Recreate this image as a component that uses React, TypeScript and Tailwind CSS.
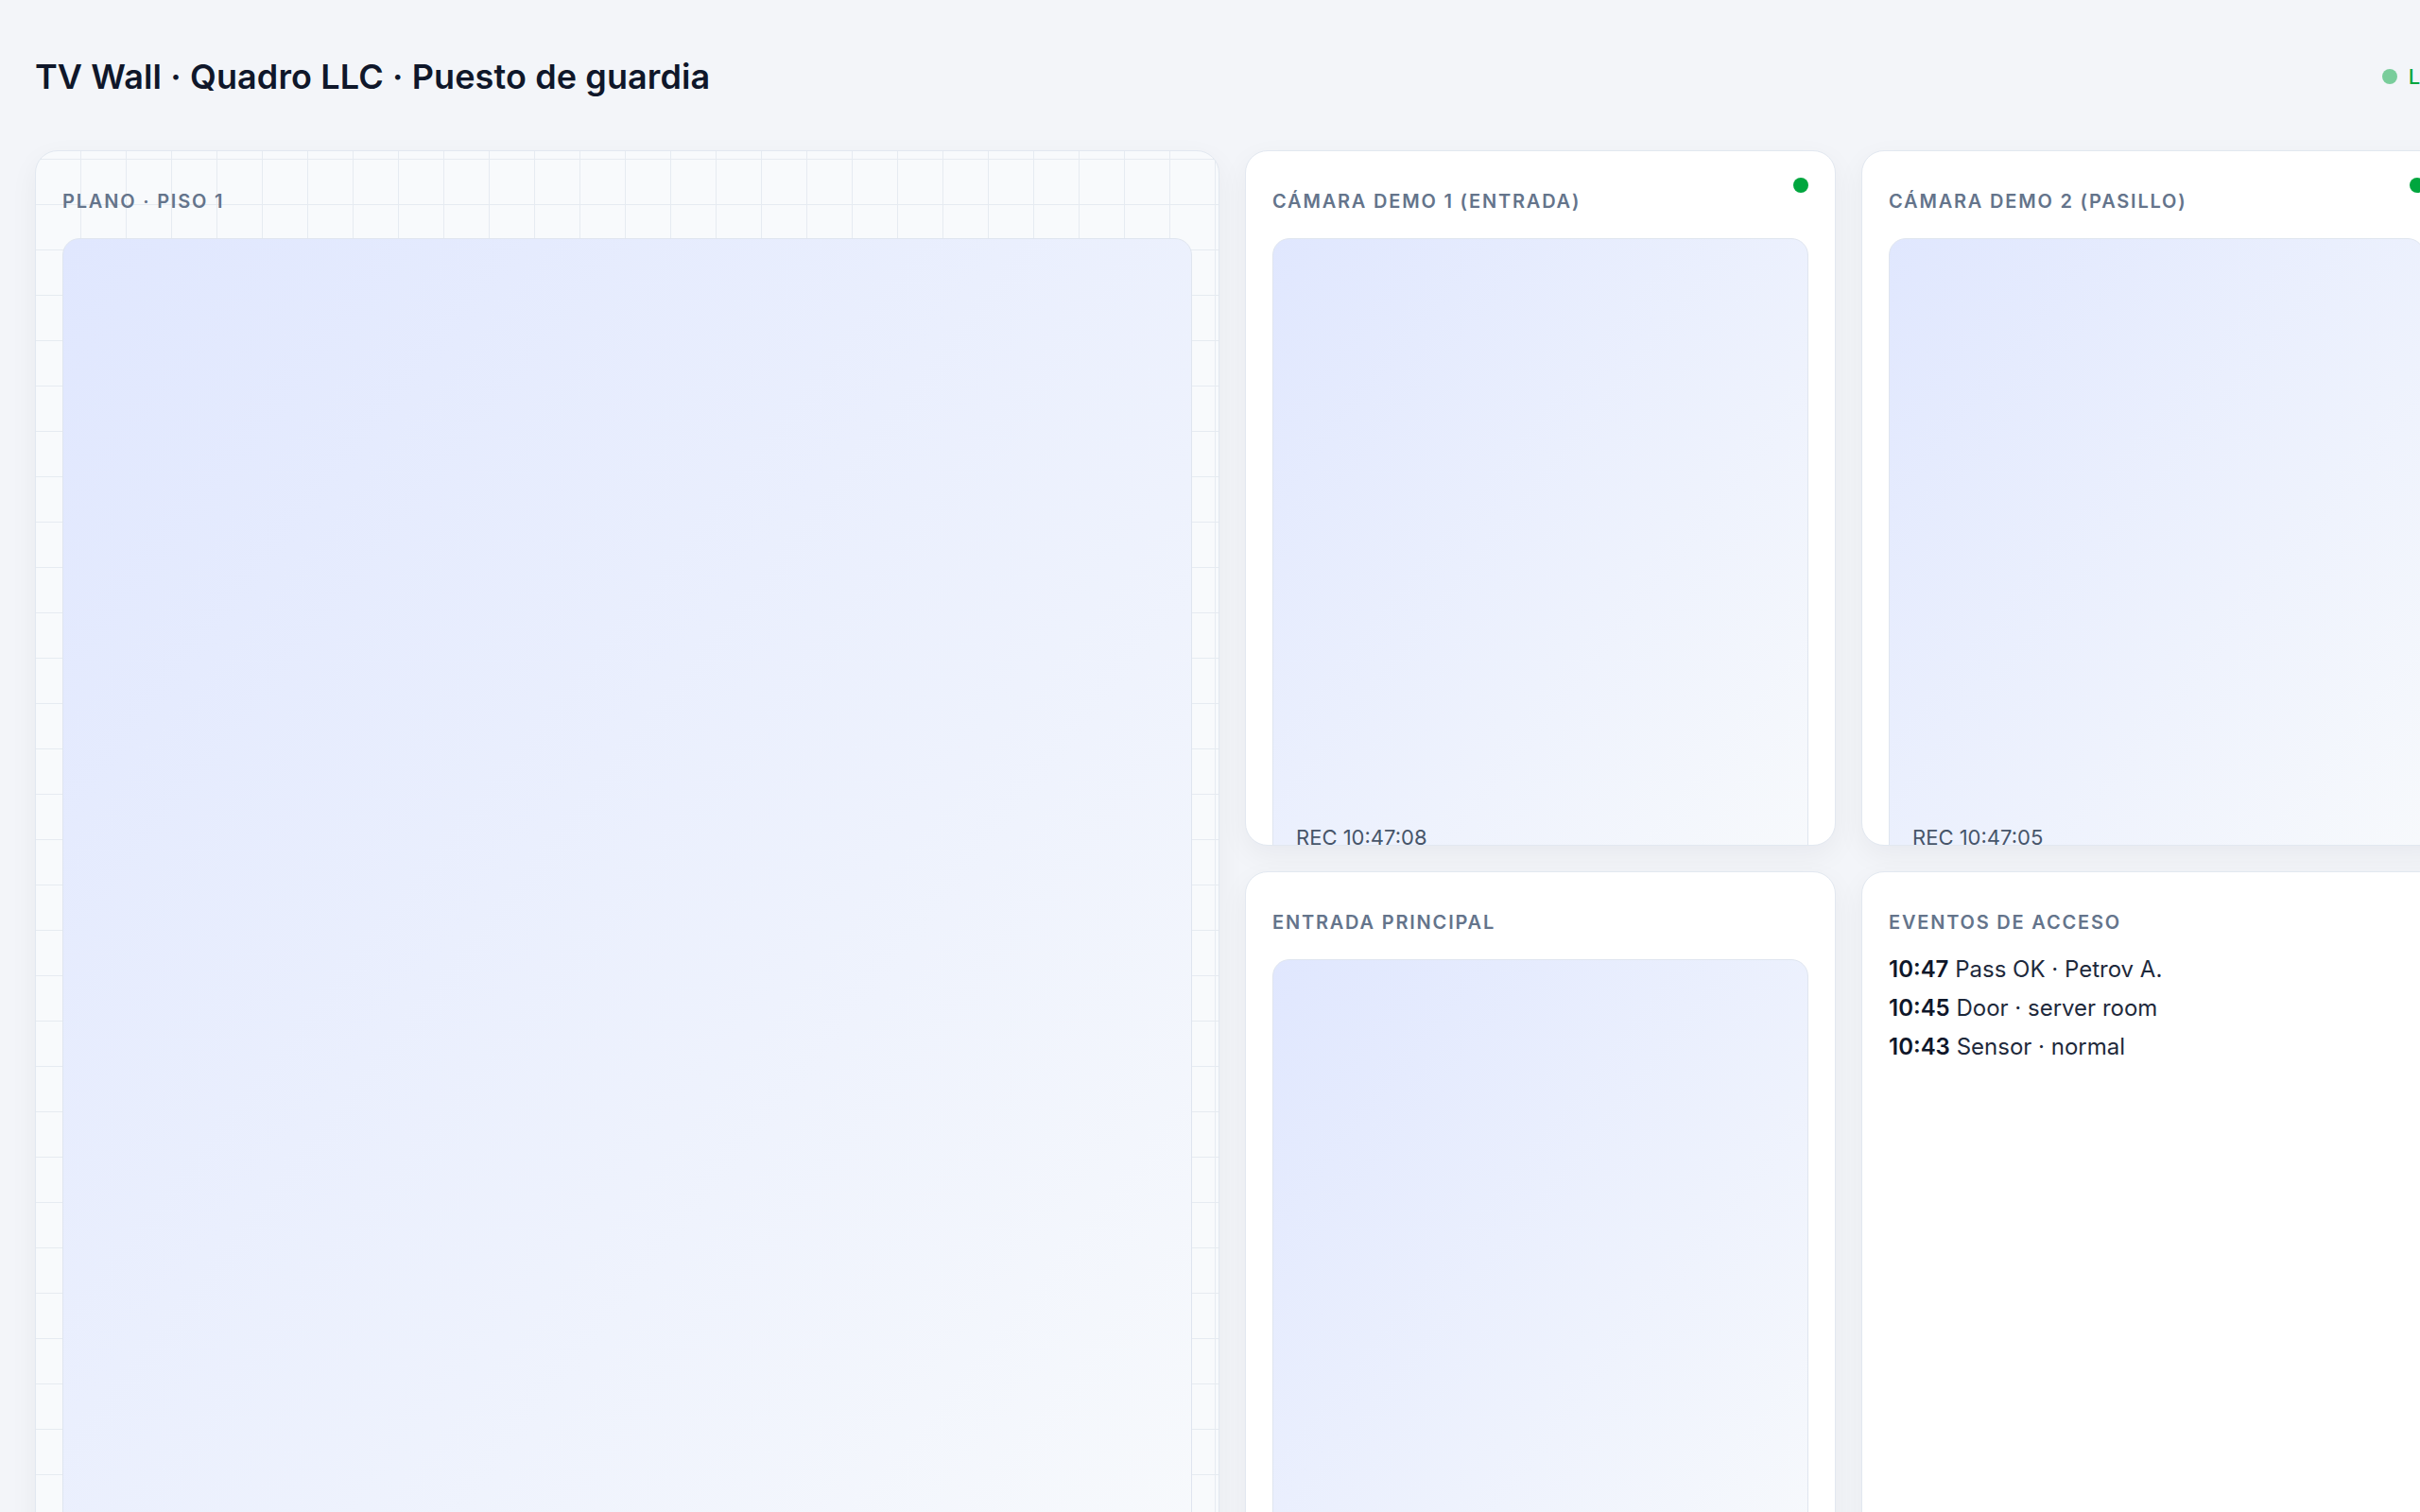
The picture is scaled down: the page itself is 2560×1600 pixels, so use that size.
import type { ReactNode } from 'react'

const events = [
  { time: '10:47', text: 'Pass OK · Petrov A.' },
  { time: '10:45', text: 'Door · server room' },
  { time: '10:43', text: 'Sensor · normal' },
]

function CardHeader({ title, live }: { title: string; live?: boolean }) {
  return (
    <div className="flex h-[64px] shrink-0 items-start justify-between">
      <h2 className="mt-[15px] text-[20px] leading-[20px] font-semibold tracking-[0.09em] text-[#64748b] uppercase">
        {title}
      </h2>
      {live && <span className="h-4 w-4 rounded-full bg-green-600" />}
    </div>
  )
}

function Card({ children, className = '' }: { children: ReactNode; className?: string }) {
  return (
    <section
      className={`flex flex-col overflow-hidden rounded-3xl border border-[#e2e8f0] p-7 shadow-[0_10px_30px_rgba(15,23,42,0.05)] ${className}`}
    >
      {children}
    </section>
  )
}

function Feed({ rec }: { rec?: string }) {
  return (
    <div className="relative h-[700px] shrink-0 rounded-[18px] border border-[#dfe5ef] bg-linear-to-br from-[#e0e7fe] to-[#f8fafc]">
      {rec && (
        <span className="absolute top-[619px] left-6 text-[22px] leading-[28px] text-[#475569]">
          REC {rec}
        </span>
      )}
    </div>
  )
}

function CameraCard({ title, rec, live }: { title: string; rec?: string; live?: boolean }) {
  return (
    <Card className="bg-white">
      <CardHeader title={title} live={live} />
      <Feed rec={rec} />
    </Card>
  )
}

export default function App() {
  return (
    <div className="h-[1600px] w-[2560px] overflow-hidden bg-[#f3f5f9] font-['Inter',sans-serif] text-slate-900">
      <div className="w-[2595px] pt-[37px] pl-[37px]">
        {/* Header */}
        <header className="mb-[34px] flex h-[88px] items-center justify-between">
          <h1 className="text-[36px] font-semibold tracking-[0.003em] text-[#0f172a]">
            TV Wall · Quadro LLC · Puesto de guardia
          </h1>
          <div className="flex items-center gap-3">
            <span className="h-4 w-4 rounded-full bg-green-600/50" />
            <span className="text-[22px] font-medium text-green-600">LIVE</span>
          </div>
        </header>

        {/* Wall */}
        <div className="grid grid-cols-[1253px_625px_625px] grid-rows-[736px_736px] gap-[27px]">
          <Card className="row-span-2 bg-[#f8fafc] bg-[image:linear-gradient(to_right,#e6ebf1_1px,transparent_1px),linear-gradient(to_bottom,#e6ebf1_1px,transparent_1px)] bg-[size:48px_48px] bg-[position:47px_8px]">
            <CardHeader title="Plano · Piso 1" />
            <div className="h-[1500px] shrink-0 rounded-[18px] border border-[#dfe5ef] bg-linear-to-br from-[#e0e7fe] to-[#f8fafc]" />
          </Card>

          <CameraCard title="Cámara demo 1 (entrada)" rec="10:47:08" live />
          <CameraCard title="Cámara demo 2 (pasillo)" rec="10:47:05" live />
          <CameraCard title="Entrada principal" />

          <Card className="bg-white">
            <CardHeader title="Eventos de acceso" />
            <ul className="-mt-[5px] flex flex-col gap-[9px] text-[24px] leading-[32px] text-[#1e293b]">
              {events.map((e) => (
                <li key={e.time}>
                  <span className="font-semibold text-[#0f172a]">{e.time}</span> {e.text}
                </li>
              ))}
            </ul>
          </Card>
        </div>
      </div>
    </div>
  )
}
